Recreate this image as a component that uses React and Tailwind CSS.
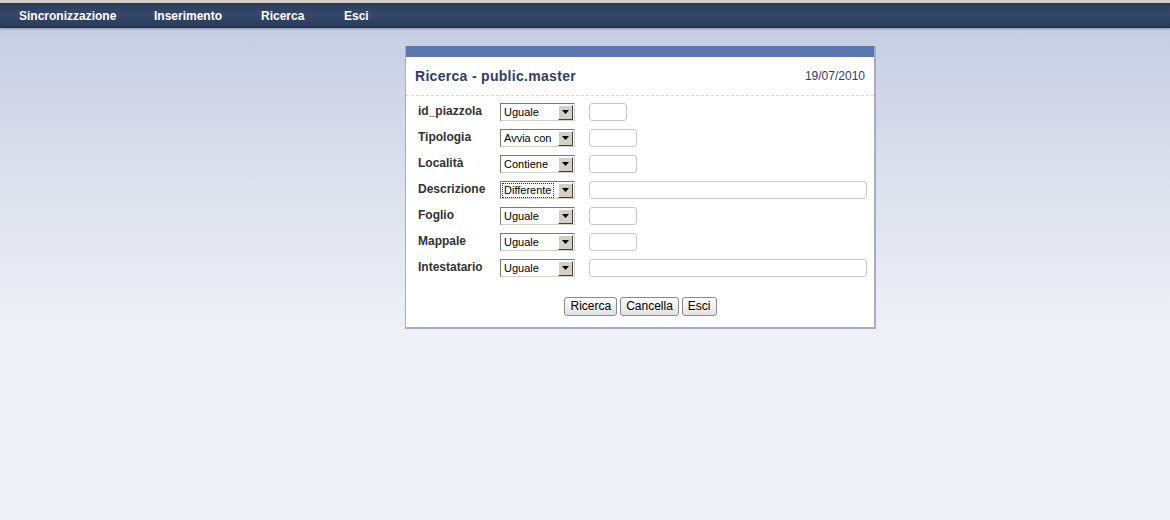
const menu = [
  { name: "Sincronizzazione", w: "w-[135px]" },
  { name: "Inserimento", w: "w-[107px]" },
  { name: "Ricerca", w: "w-[83px]" },
  { name: "Esci", w: "w-[40px]" },
];

const rows = [
  { label: "id_piazzola", op: "Uguale", w: "w-[38px]" },
  { label: "Tipologia", op: "Avvia con", w: "w-[48px]" },
  { label: "Località", op: "Contiene", w: "w-[48px]" },
  { label: "Descrizione", op: "Differente", w: "w-[278px]", focus: true },
  { label: "Foglio", op: "Uguale", w: "w-[48px]" },
  { label: "Mappale", op: "Uguale", w: "w-[48px]" },
  { label: "Intestatario", op: "Uguale", w: "w-[278px]" },
];

function FakeSelect({ value, focus }) {
  return (
    <div className="flex h-[18px] w-[75px] items-center border border-[#7a7a7a] border-r-[#d4d0c8] border-b-[#d4d0c8] bg-white">
      <div className="flex h-full flex-1 items-center pl-[2px]">
        <span
          className={
            "px-[1px] text-[11px] leading-[13px] text-black " +
            (focus ? "outline outline-1 outline-dotted outline-[#333]" : "")
          }
        >
          {value}
        </span>
      </div>
      <div className="mr-[1px] flex h-[15px] w-[15px] items-center justify-center border border-[#fff] border-r-[#404040] border-b-[#404040] bg-[#d4d0c8]">
        <svg width="7" height="4" viewBox="0 0 7 4">
          <path d="M0 0h7L3.5 4z" fill="#000" />
        </svg>
      </div>
    </div>
  );
}

function Btn({ children }) {
  return (
    <button className="h-[19px] rounded-[3px] border border-[#8a8a8a] bg-gradient-to-b from-[#fdfdfd] to-[#e2e2e2] px-[5px] text-[12px] leading-[15px] text-black">
      {children}
    </button>
  );
}

export default function App() {
  return (
    <div className="min-h-screen bg-[linear-gradient(#c6cee3_0px,#c6cee3_28px,#dfe3ee_200px,#eef0f6_330px,#f0f1f6_520px)] font-['Liberation_Sans',Arial,sans-serif]">
      <div className="h-[3px] bg-[#d4d0c8]" />
      <div className="flex h-[25px] items-center border-b border-[#1f2c44] bg-[linear-gradient(#2a3c5b,#36496b_50%,#2a3b59)] pl-[19px] pt-[1px] shadow-[0_1px_2px_rgba(40,50,80,0.4)]">
        {menu.map((m) => (
          <span key={m.name} className={"text-[12px] font-bold text-white " + m.w}>
            {m.name}
          </span>
        ))}
      </div>

      <div className="ml-[405px] mt-[18px] w-[471px] border-l border-r-2 border-b-2 border-[#a4acc8] bg-white">
        <div className="h-[11px] bg-[#5a77ae]" />
        <div className="flex h-[39px] items-center justify-between border-b border-dashed border-[#d8d8d8] pl-[9px] pr-[9px]">
          <span className="text-[14px] font-bold tracking-[0.3px] text-[#2e4068]">
            Ricerca - public.master
          </span>
          <span className="text-[12px] text-[#2e4068]">19/07/2010</span>
        </div>

        <div className="flex flex-col gap-[8px] pl-[12px] pt-[7px]">
          {rows.map((r) => (
            <div key={r.label} className="flex h-[18px] items-center">
              <div className="-mt-[3px] w-[82px] text-[12px] font-bold text-[#333]">{r.label}</div>
              <FakeSelect value={r.op} focus={r.focus} />
              <div className={"ml-[14px] h-[18px] rounded-[3px] border border-[#c8c8c8] bg-white " + r.w} />
            </div>
          ))}
        </div>

        <div className="flex justify-center gap-[3px] pb-[11px] pl-[1px] pt-[20px]">
          <Btn>Ricerca</Btn>
          <Btn>Cancella</Btn>
          <Btn>Esci</Btn>
        </div>
      </div>
    </div>
  );
}
